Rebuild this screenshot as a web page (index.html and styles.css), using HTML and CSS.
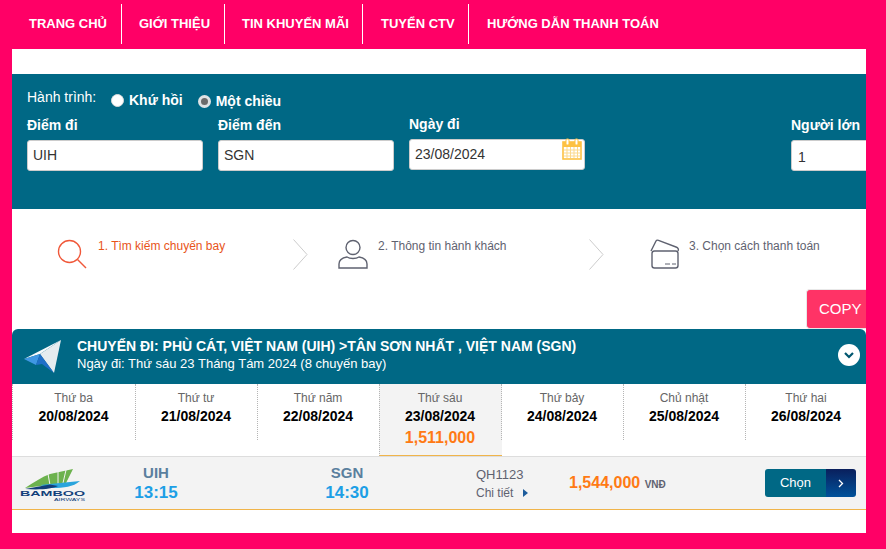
FILE: index.html
```html
<!DOCTYPE html>
<html lang="vi">

<head>
    <meta charset="UTF-8">
    <meta name="viewport" content="width=device-width, initial-scale=1.0">
    <title>Đặt vé máy bay</title>
    <link rel="stylesheet" href="styles.css">
</head>

<body>
    <nav class="nav">
        <a class="nav-item nav-item-1" href="#">TRANG CHỦ</a>
        <a class="nav-item nav-item-2" href="#">GIỚI THIỆU</a>
        <a class="nav-item nav-item-3" href="#">TIN KHUYẾN MÃI</a>
        <a class="nav-item nav-item-4" href="#">TUYỂN CTV</a>
        <a class="nav-item nav-item-5" href="#">HƯỚNG DẪN THANH TOÁN</a>
    </nav>

    <main class="main">
        <form class="search">
            <div class="search-type">
                <span class="search-type_label">Hành trình:</span>
                <label class="radio"><span class="radio-dot"></span>Khứ hồi</label>
                <label class="radio radio-checked"><span class="radio-dot"></span>Một chiều</label>
            </div>
            <div class="search-fields">
                <div class="field">
                    <label class="field-label">Điểm đi</label>
                    <div class="field-input">UIH</div>
                </div>
                <div class="field">
                    <label class="field-label">Điểm đến</label>
                    <div class="field-input">SGN</div>
                </div>
                <div class="field field-date">
                    <label class="field-label">Ngày đi</label>
                    <div class="field-input">23/08/2024</div>
                    <svg class="field-calendar" width="20" height="22" viewBox="0 0 20 22">
                        <rect x="1" y="4" width="18" height="17" fill="#fff" stroke="#fdc143" stroke-width="1.6"/>
                        <rect x="1" y="4" width="18" height="5" fill="#fdc143"/>
                        <rect x="4" y="1" width="3" height="6" rx="1" fill="#fff" stroke="#fdc143"/>
                        <rect x="13" y="1" width="3" height="6" rx="1" fill="#fff" stroke="#fdc143"/>
                        <path d="M2 12h16M2 15h16M2 18h16M5 9v11M8.500 9v11M12 9v11M15.500 9v11" stroke="#fbd98f" fill="none"/>
                    </svg>
                </div>
                <div class="field field-adult">
                    <label class="field-label">Người lớn</label>
                    <div class="field-input">1</div>
                </div>
            </div>
        </form>

        <section class="steps">
            <div class="step step-1 step-active">
                <svg class="step-icon" width="30" height="30" viewBox="0 0 30 30">
                    <circle cx="12.500" cy="12.500" r="11" fill="none" stroke="#f0583a" stroke-width="1.400"/>
                    <path d="M20.500 20.500L29 29" stroke="#f0583a" stroke-width="1.400" fill="none"/>
                </svg>
                <span>1. Tìm kiếm chuyến bay</span>
            </div>
            <svg class="step-arrow" width="15" height="31" viewBox="0 0 15 31"><path d="M0.500 0.500L14 15.500L0.500 30.500" fill="none" stroke="#cccccc"/></svg>
            <div class="step step-2">
                <svg class="step-icon" width="30" height="30" viewBox="0 0 30 30">
                    <circle cx="15" cy="8.500" r="7" fill="none" stroke="#5f6270" stroke-width="1.400"/>
                    <path d="M1 29V25C1 20 6 18.500 9 18C12 20 18 20 21 18C24 18.500 29 20 29 25V29Z" fill="none" stroke="#5f6270" stroke-width="1.400"/>
                </svg>
                <span>2. Thông tin hành khách</span>
            </div>
            <svg class="step-arrow" width="15" height="31" viewBox="0 0 15 31"><path d="M0.500 0.500L14 15.500L0.500 30.500" fill="none" stroke="#cccccc"/></svg>
            <div class="step step-3">
                <svg class="step-icon" width="30" height="30" viewBox="0 0 30 30">
                    <rect x="2" y="12" width="26" height="17" rx="2.500" fill="none" stroke="#5f6270" stroke-width="1.400"/>
                    <path d="M1 12L6 2C6.500 1 7.500 1 8.500 1.300L26 8C28 8.800 29 10 28 12" fill="none" stroke="#5f6270" stroke-width="1.400"/>
                    <path d="M15 25h5M22 25h4" stroke="#5f6270" fill="none"/>
                </svg>
                <span>3. Chọn cách thanh toán</span>
            </div>
        </section>

        <button class="copy" type="button">COPY</button>

        <section class="flight">
            <header class="flight-header">
                <svg class="flight-plane" width="40" height="36" viewBox="0 0 40 36">
                    <path d="M1 20L38 1L17 15Z" fill="#f7fafc"/>
                    <path d="M38 1L17 15L31 34Z" fill="#e6ecef"/>
                    <path d="M1 20L17 15L13 26Z" fill="#3f97e4"/>
                    <path d="M17 15L13 26L19 25L31 34Z" fill="#1f6fc8"/>
                </svg>
                <div class="flight-title">
                    <h1>CHUYẾN ĐI: PHÙ CÁT, VIỆT NAM (UIH) &gt;TÂN SƠN NHẤT , VIỆT NAM (SGN)</h1>
                    <p>Ngày đi: Thứ sáu 23 Tháng Tám 2024 (8 chuyến bay)</p>
                </div>
                <span class="flight-toggle">
                    <svg width="10" height="7" viewBox="0 0 10 7"><path d="M1 1L5 5L9 1" fill="none" stroke="#00566f" stroke-width="2.200"/></svg>
                </span>
            </header>

            <div class="days">
                <div class="day"><span class="day-name">Thứ ba</span><strong class="day-date">20/08/2024</strong></div>
                <div class="day"><span class="day-name">Thứ tư</span><strong class="day-date">21/08/2024</strong></div>
                <div class="day"><span class="day-name">Thứ năm</span><strong class="day-date">22/08/2024</strong></div>
                <div class="day day-active"><span class="day-name">Thứ sáu</span><strong class="day-date">23/08/2024</strong><strong class="day-price">1,511,000</strong></div>
                <div class="day"><span class="day-name">Thứ bảy</span><strong class="day-date">24/08/2024</strong></div>
                <div class="day"><span class="day-name">Chủ nhật</span><strong class="day-date">25/08/2024</strong></div>
                <div class="day"><span class="day-name">Thứ hai</span><strong class="day-date">26/08/2024</strong></div>
            </div>

            <div class="row">
                <svg class="row-logo" width="66" height="34" viewBox="0 0 66 34">
                    <path d="M5 20C14 14 22 9 30 6L53 1L46 15L28 17Z" fill="#6cb24e"/>
                    <path d="M28 6L30 17M38 3L38 16M46 2L43 15" stroke="#f3f3f3" fill="none"/>
                    <path d="M20 17L60 13C53 19 44 20 32 20Z" fill="#29a4dc"/>
                    <path d="M5 21L30 16.500L38 18C32 21 20 22 5 21Z" fill="#123f7a"/>
                    <text class="row-logo_name" x="0" y="28" textLength="65" lengthAdjust="spacingAndGlyphs">BAMBOO</text>
                    <text class="row-logo_sub" x="34" y="32.500" textLength="31" lengthAdjust="spacingAndGlyphs">AIRWAYS</text>
                </svg>
                <div class="row-point row-from"><span class="row-code">UIH</span><strong class="row-time">13:15</strong></div>
                <div class="row-point row-to"><span class="row-code">SGN</span><strong class="row-time">14:30</strong></div>
                <div class="row-info">
                    <div class="row-number">QH1123</div>
                    <div class="row-detail">Chi tiết <span class="row-detail_arrow"></span></div>
                </div>
                <div class="row-price"><strong>1,544,000</strong> <span>VNĐ</span></div>
                <button class="pick" type="button">
                    <span class="pick-label">Chọn</span>
                    <span class="pick-arrow"><svg width="6" height="9" viewBox="0 0 6 9"><path d="M1 1L4.500 4.500L1 8" fill="none" stroke="#fff" stroke-width="1.300"/></svg></span>
                </button>
            </div>
        </section>
    </main>
</body>

</html>
```

FILE: styles.css
```css
* {
    box-sizing: border-box;
}

html,
body {
    height: 100%;
}

body {
    margin: 0;
    padding: 0 20px 16px 12px;
    background: #ff0066;
    font-family: "Liberation Sans", Arial, sans-serif;
    overflow: hidden;
}

h1,
p {
    margin: 0;
}

.nav {
    display: flex;
    height: 49px;
    margin-right: -20px;
    padding-top: 4px;
}

.nav-item {
    display: block;
    height: 40px;
    padding: 0 0 0 17px;
    border-right: 1px solid #fff;
    color: #fff;
    font-size: 13px;
    font-weight: bold;
    line-height: 39px;
    text-decoration: none;
    white-space: nowrap;
}

.nav-item-1 {
    width: 110px;
}

.nav-item-2 {
    width: 103px;
}

.nav-item-3 {
    width: 138px;
}

.nav-item-4 {
    width: 106px;
    padding-left: 18px;
}

.nav-item-5 {
    border-right: 0;
    padding-left: 18px;
}

.main {
    position: relative;
    height: 484px;
    padding-top: 25px;
    background: #fff;
}

.search {
    height: 135px;
    padding: 14px 0 0 15px;
    background: #006885;
    color: #fff;
    overflow: hidden;
}

.search-type {
    display: flex;
    align-items: flex-start;
    height: 28px;
    font-size: 14px;
}

.search-type_label {
    width: 84px;
    line-height: 18px;
}

.radio {
    display: flex;
    align-items: center;
    height: 24px;
    margin-right: 15px;
    font-weight: bold;
    line-height: 24px;
}

.radio-checked {
    margin-top: 1px;
}

.radio-dot {
    width: 13px;
    height: 13px;
    margin-right: 5px;
    border: 1px solid #dddddd;
    border-radius: 50%;
    background: #fff;
}

.radio-checked .radio-dot {
    border: 3px solid #dfe3e5;
    background: #6b6b6b;
}

.search-fields {
    display: flex;
    gap: 15px;
}

.field {
    position: relative;
    flex: 0 0 176px;
}

.field-label {
    display: block;
    height: 24px;
    font-size: 14px;
    font-weight: bold;
    line-height: 18px;
}

.field-input {
    height: 31px;
    padding-left: 5px;
    border: 1px solid #cccccc;
    border-radius: 3px;
    background: #fff;
    color: #333333;
    font-size: 14px;
    line-height: 29px;
}

.field-date {
    margin-top: -1px;
}

.field-calendar {
    position: absolute;
    top: 23px;
    right: 3px;
}

.field-adult {
    flex: 0 0 100px;
    margin-left: 191px;
}

.field-adult .field-input {
    padding-left: 6px;
    line-height: 33px;
}

.steps {
    display: flex;
    align-items: flex-start;
    height: 120px;
    padding: 30px 0 0 45px;
    color: #5f6270;
    font-size: 12px;
}

.step {
    display: flex;
    gap: 11px;
    line-height: 14px;
}

.step-icon {
    flex: none;
}

.step-active {
    color: #e8541a;
}

.step-1 {
    width: 236px;
}

.step-2 {
    width: 251px;
    margin-left: 30px;
    gap: 10px;
}

.step-3 {
    margin-left: 46px;
    gap: 9px;
}

.copy {
    position: absolute;
    top: 240px;
    right: 0;
    width: 60px;
    height: 40px;
    padding: 0 0 2px 12px;
    border: 1px solid #e8e8e8;
    border-right: 0;
    border-radius: 4px 0 0 4px;
    background: #ff3366;
    color: #fff;
    font-family: inherit;
    font-size: 15px;
    text-align: left;
}

.flight-header {
    display: flex;
    align-items: flex-start;
    height: 55px;
    padding: 8px 6px 0 11px;
    border-radius: 6px 6px 0 0;
    background: #006885;
    color: #fff;
}

.flight-plane {
    flex: none;
    margin: 2px 14px 0 0;
}

.flight-title {
    flex: 1;
    font-size: 13px;
    line-height: 18px;
}

.flight-title h1 {
    font-size: 14px;
    font-weight: bold;
}

.flight-toggle {
    display: flex;
    align-items: center;
    justify-content: center;
    width: 22px;
    height: 22px;
    margin-top: 7px;
    border-radius: 50%;
    background: #fff;
}

.days {
    display: grid;
    grid-template-columns: 124px repeat(5, 122px) auto;
    height: 73px;
    border-bottom: 1px solid #dddddd;
}

.day {
    position: relative;
    display: flex;
    flex-direction: column;
    align-items: center;
    padding: 7px 2px 0 0;
    text-align: center;
}

.day::after {
    content: "";
    position: absolute;
    top: 0;
    right: 0;
    height: 56px;
    border-right: 1px dotted #b5b5b5;
}

.day:last-child {
    padding-right: 0;
}

.day:last-child::after {
    display: none;
}

.day:first-child {
    border-left: 1px dotted #b5b5b5;
    height: 56px;
}

.day-active {
    margin-left: -1px;
    height: 72px;
    background: #f3f3f3;
    border-bottom: 1px solid #f0b44a;
    border-left: 1px dotted #b5b5b5;
}

.day-name {
    color: #666666;
    font-size: 12px;
    line-height: 15px;
}

.day-date {
    color: #000;
    font-size: 14px;
    line-height: 20px;
}

.day-price {
    color: #ff7a14;
    font-size: 16px;
    line-height: 24px;
}

.row {
    display: flex;
    align-items: flex-start;
    height: 53px;
    border-bottom: 1px solid #f0b44a;
    background: #f3f3f3;
}

.row-logo {
    flex: none;
    margin: 11px 0 0 8px;
}

.row-logo_name {
    fill: #123f7a;
    font-size: 8px;
    font-weight: bold;
}

.row-logo_sub {
    fill: #123f7a;
    font-size: 3px;
}

.row-point {
    display: flex;
    flex-direction: column;
    align-items: center;
    flex: none;
    width: 60px;
    padding-top: 7px;
}

.row-from {
    margin-left: 40px;
}

.row-to {
    margin-left: 131px;
}

.row-code {
    color: #5a7f9e;
    font-size: 15px;
    font-weight: bold;
    line-height: 18px;
}

.row-time {
    color: #1c9fe6;
    font-size: 17px;
    line-height: 21px;
}

.row-info {
    flex: none;
    width: 93px;
    margin-left: 99px;
    padding-top: 8px;
    color: #5f6270;
    font-size: 12px;
    line-height: 19px;
}

.row-number {
    font-size: 13px;
}

.row-detail_arrow {
    display: inline-block;
    margin-left: 6px;
    border-left: 5px solid #1d5c9c;
    border-top: 4.500px solid transparent;
    border-bottom: 4.500px solid transparent;
}

.row-price {
    flex: none;
    width: 196px;
    padding-top: 16px;
    line-height: 20px;
}

.row-price strong {
    color: #ff7a14;
    font-size: 16px;
}

.row-price span {
    color: #5f6270;
    font-size: 10px;
    font-weight: bold;
}

.pick {
    display: flex;
    flex: none;
    width: 91px;
    height: 28px;
    margin-top: 12px;
    padding: 0;
    border: 0;
    border-radius: 3px;
    overflow: hidden;
    color: #fff;
    font-family: inherit;
    font-size: 13px;
}

.pick-label {
    width: 61px;
    background: #006885;
    line-height: 27px;
}

.pick-arrow {
    display: flex;
    align-items: center;
    justify-content: center;
    width: 30px;
    background: linear-gradient(#0a1f5c, #00529b);
}
```
